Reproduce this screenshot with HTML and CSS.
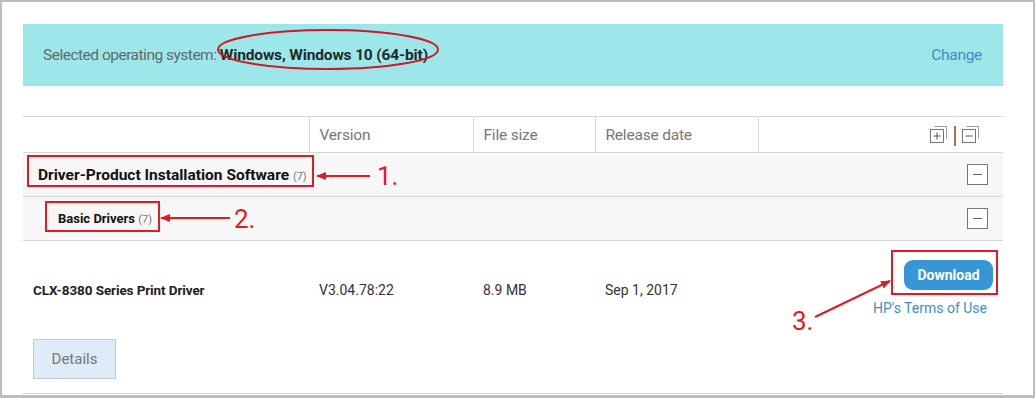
FILE: index.html
```html
<!DOCTYPE html>
<html lang="en">
<head>
    <meta charset="UTF-8">
    <title>Drivers</title>
    <link rel="stylesheet" href="styles.css">
</head>
<body>
    <div class="frame">
        <div class="os-bar">
            <p class="os-text">Selected operating system: <b>Windows, Windows 10 (64-bit)</b></p>
            <a href="#" class="change">Change</a>
        </div>

        <table class="drivers">
            <tr class="head">
                <th class="c-name"></th>
                <th class="c-ver">Version</th>
                <th class="c-size">File size</th>
                <th class="c-date">Release date</th>
                <th class="c-act">
                    <span class="tools">
                        <svg width="18" height="19" viewBox="0 0 18 19">
                            <path d="M4.5 1.5h12v12" fill="none" stroke="#999" stroke-width="1"/>
                            <rect x="0.5" y="4.5" width="13" height="13" fill="#fff" stroke="#777"/>
                            <path d="M3.5 11h7M7 7.5v7" stroke="#555"/>
                        </svg>
                        <span class="bar"></span>
                        <svg width="18" height="19" viewBox="0 0 18 19">
                            <path d="M4.5 1.5h12v12" fill="none" stroke="#999" stroke-width="1"/>
                            <rect x="0.5" y="4.5" width="13" height="13" fill="#fff" stroke="#777"/>
                            <path d="M3.5 11h7" stroke="#555"/>
                        </svg>
                    </span>
                </th>
            </tr>
            <tr class="group">
                <td colspan="5">
                    <div class="group-row">
                        <span class="g1">Driver-Product Installation Software <small>(7)</small></span>
                        <span class="toggle"></span>
                    </div>
                </td>
            </tr>
            <tr class="group">
                <td colspan="5">
                    <div class="group-row">
                        <span class="g2">Basic Drivers <small>(7)</small></span>
                        <span class="toggle"></span>
                    </div>
                </td>
            </tr>
            <tr class="item">
                <td class="name">CLX-8380 Series Print Driver</td>
                <td>V3.04.78:22</td>
                <td>8.9 MB</td>
                <td>Sep 1, 2017</td>
                <td class="act">
                    <div class="act-box">
                        <button class="download">Download</button>
                        <a href="#" class="terms">HP's Terms of Use</a>
                    </div>
                </td>
            </tr>
            <tr class="more">
                <td colspan="5"><button class="details">Details</button></td>
            </tr>
        </table>

        <!-- red marks drawn over the page -->
        <svg class="marks" width="1035" height="398" viewBox="0 0 1035 398">
            <defs>
                <marker id="head" markerWidth="10" markerHeight="8" refX="9" refY="4" orient="auto" markerUnits="userSpaceOnUse">
                    <path d="M0 0L10 4L0 8z" fill="#e01b22"/>
                </marker>
            </defs>
            <g fill="none" stroke="#e01b22" stroke-width="2">
                <ellipse cx="328" cy="49.5" rx="110" ry="19.5" stroke="#d01820"/>
                <rect x="28" y="156" width="285" height="30"/>
                <rect x="46" y="202" width="113" height="29"/>
                <rect x="892" y="251" width="105" height="43"/>
                <line x1="370" y1="176" x2="317" y2="176" marker-end="url(#head)"/>
                <line x1="230" y1="218" x2="161" y2="218" marker-end="url(#head)"/>
                <line x1="815" y1="317" x2="890" y2="281" marker-end="url(#head)"/>
            </g>
            <g fill="#e01b22" font-family="Roboto, sans-serif" font-size="26">
                <text x="377" y="185">1.</text>
                <text x="234" y="228">2.</text>
                <text x="792" y="330">3.</text>
            </g>
        </svg>
    </div>
</body>
</html>
```

FILE: styles.css
```css
* {
    box-sizing: border-box;
}

body {
    margin: 0;
    background: #fff;
    font-family: Roboto, Arial, sans-serif;
    color: #333;
}

.frame {
    position: relative;
    width: 1035px;
    height: 398px;
    border: 2px solid #bdbdbd;
    border-bottom-width: 3px;
    padding: 22px 30px 0 21px;
    overflow: hidden;
}

.os-bar {
    display: flex;
    align-items: center;
    justify-content: space-between;
    height: 62px;
    background-color: #9ee7e9;
    padding: 0 21px 0 20px;
}

.os-text {
    margin: 0;
    font-size: 15.5px;
    letter-spacing: -0.5px;
    color: #5e6b6b;
}

.os-text b {
    color: #1e2a2c;
    letter-spacing: -0.15px;
}

.change {
    color: #3b8fca;
    text-decoration: none;
    font-size: 15.5px;
    letter-spacing: -0.3px;
}

.drivers {
    width: 980px;
    margin-top: 30px;
    border-collapse: collapse;
    border-top: 1px solid #d6d6d6;
}

.drivers td,
.drivers th {
    padding: 0 0 0 10px;
    text-align: left;
    font-weight: normal;
}

.head th {
    height: 36px;
    color: #777;
    font-size: 15.5px;
    letter-spacing: -0.2px;
    border-left: 1px solid #d6d6d6;
    border-bottom: 1px solid #d6d6d6;
}

.head th.c-name {
    width: 286px;
    border-left: none;
}

.head th.c-ver { width: 164px; }
.head th.c-size { width: 122px; }
.head th.c-date { width: 163px; }

.head th.c-act {
    text-align: right;
    padding-right: 23px;
}

.tools {
    display: inline-flex;
    align-items: center;
    gap: 6px;
    vertical-align: middle;
}

.bar {
    width: 2px;
    height: 20px;
    background: #9c7656;
    margin-top: 3px;
}

.group td {
    background: #f7f7f7;
    border-bottom: 1px solid #d6d6d6;
    padding: 0;
}

.group-row {
    display: flex;
    align-items: center;
    justify-content: space-between;
    height: 43px;
    padding: 0 15px;
}

.g1 {
    font-weight: bold;
    font-size: 15.5px;
    color: #111;
}

.g2 {
    font-weight: bold;
    font-size: 13px;
    color: #111;
    padding-left: 20px;
}

.group small {
    font-weight: normal;
    font-size: 11px;
    color: #777;
}

.toggle {
    position: relative;
    width: 21px;
    height: 21px;
    border: 1px solid #777;
    background: #fff;
}

.toggle::after {
    content: "";
    position: absolute;
    left: 5px;
    top: 9px;
    width: 9px;
    height: 1px;
    background: #666;
}

.item td {
    height: 98px;
    font-size: 14px;
    color: #333;
    vertical-align: middle;
    padding-top: 0;
}

.item td.name {
    font-weight: bold;
    color: #222;
    font-size: 13.5px;
    letter-spacing: -0.1px;
}

.item td.act {
    padding-right: 10px;
}

.act-box {
    display: flex;
    flex-direction: column;
    align-items: flex-end;
    gap: 10px;
    margin-top: -4px;
}

.download {
    width: 89px;
    height: 30px;
    border: none;
    border-radius: 9px;
    background: #3796d6;
    color: #fff;
    font-family: inherit;
    font-size: 14px;
    font-weight: bold;
}

.terms {
    color: #3b8ed0;
    font-size: 14px;
    text-decoration: none;
    margin-right: 6px;
}

.more td {
    padding: 0 0 14px 10px;
    border-bottom: 1px solid #cfcfcf;
}

.details {
    width: 83px;
    height: 40px;
    background: #ddecf8;
    border: 1px solid #bfcbd4;
    color: #777;
    font-family: inherit;
    font-size: 15px;
}

.marks {
    position: absolute;
    left: -2px;
    top: -2px;
    pointer-events: none;
}
```
